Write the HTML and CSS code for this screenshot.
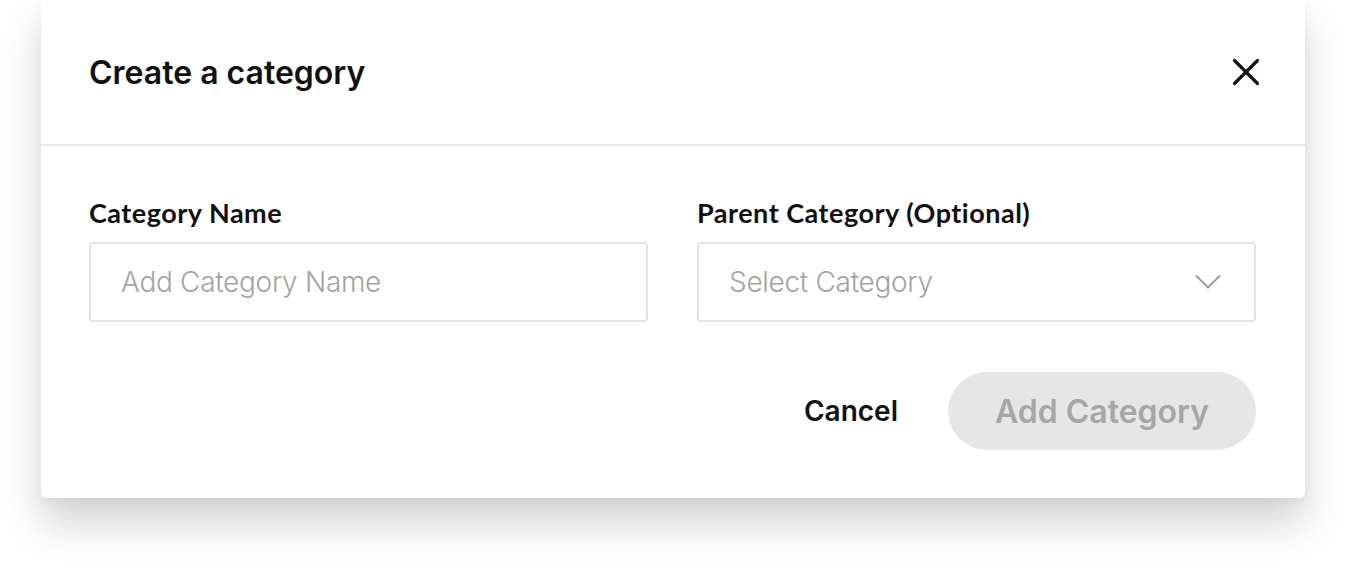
FILE: index.html
```html
<!DOCTYPE html>
<html lang="en">
<head>
<meta charset="utf-8">
<title>Create a category</title>
<link rel="stylesheet" href="styles.css">
</head>
<body>
<div class="modal">
  <div class="modal-header">
    <h1 class="modal-title">Create a category</h1>
    <button class="close-btn" aria-label="Close">
      <svg width="28" height="28" viewBox="0 0 28 28"><path d="M2.5 2.5 L25.5 25.5 M25.5 2.5 L2.5 25.5" stroke="#111" stroke-width="3.2" stroke-linecap="round" fill="none"/></svg>
    </button>
  </div>
  <div class="modal-body">
    <div class="fields">
      <div class="field">
        <label class="field-label">Category Name</label>
        <div class="input"><span class="placeholder">Add Category Name</span></div>
      </div>
      <div class="field">
        <label class="field-label">Parent Category (Optional)</label>
        <div class="input select"><span class="placeholder">Select Category</span>
          <svg class="chevron" width="26" height="16" viewBox="0 0 26 16"><path d="M1.5 2 L13 13.5 L24.5 2" stroke="#9a9a9a" stroke-width="2" fill="none" stroke-linecap="round" stroke-linejoin="round"/></svg>
        </div>
      </div>
    </div>
    <div class="actions">
      <button class="btn-cancel">Cancel</button>
      <button class="btn-add">Add Category</button>
    </div>
  </div>
</div>
</body>
</html>
```
FILE: styles.css
```css
* { box-sizing: border-box; }
html, body { margin: 0; padding: 0; background: #fff; }
body {
  font-family: Inter, "Noto Sans", sans-serif;
  min-height: 578px;
  padding-bottom: 81px;
}

.modal {
  margin-left: 41px;
  width: 1264px;
  background: #fff;
  border-radius: 0 0 5px 5px;
  box-shadow: 0 26px 40px rgba(0,0,0,0.17), 0 4px 12px rgba(0,0,0,0.05);
}

.modal-header {
  height: 146px;
  padding: 0 44px 0 48px;
  display: flex;
  align-items: center;
  justify-content: space-between;
  border-bottom: 2px solid #e6e6e6;
}
.modal-title {
  margin: 0;
  font-size: 32px;
  font-weight: 600;
  color: #111;
}
.close-btn {
  background: none;
  border: none;
  padding: 0;
  width: 30px;
  height: 30px;
  display: flex;
  align-items: center;
  justify-content: center;
}

.modal-body {
  padding: 52px 49px 48px 48px;
}
.fields {
  display: grid;
  grid-template-columns: 1fr 1fr;
  gap: 49px;
}
.field { display: flex; flex-direction: column; }
.field-label {
  font-family: Lato, "Noto Sans", sans-serif;
  font-weight: 700;
  font-size: 27px;
  line-height: 30px;
  letter-spacing: 0.5px;
  color: #111;
  margin-bottom: 14px;
}
.input {
  height: 80px;
  border: 2px solid #e2e2e2;
  border-radius: 4px;
  display: flex;
  align-items: center;
  padding: 0 33px 0 30px;
}
.select { justify-content: space-between; }
.placeholder {
  font-size: 28px;
  font-weight: 300;
  letter-spacing: -0.3px;
  color: #a3a3a3;
}

.actions {
  margin-top: 50px;
  display: flex;
  justify-content: flex-end;
  align-items: center;
  gap: 50px;
}
.btn-cancel {
  background: none;
  border: none;
  padding: 0;
  font-family: Inter, "Noto Sans", sans-serif;
  font-size: 28px;
  font-weight: 600;
  color: #111;
}
.btn-add {
  height: 78px;
  width: 308px;
  border: none;
  border-radius: 39px;
  background: #e6e6e6;
  color: #a6a6a6;
  font-family: Inter, "Noto Sans", sans-serif;
  font-size: 32px;
  font-weight: 600;
}
```
